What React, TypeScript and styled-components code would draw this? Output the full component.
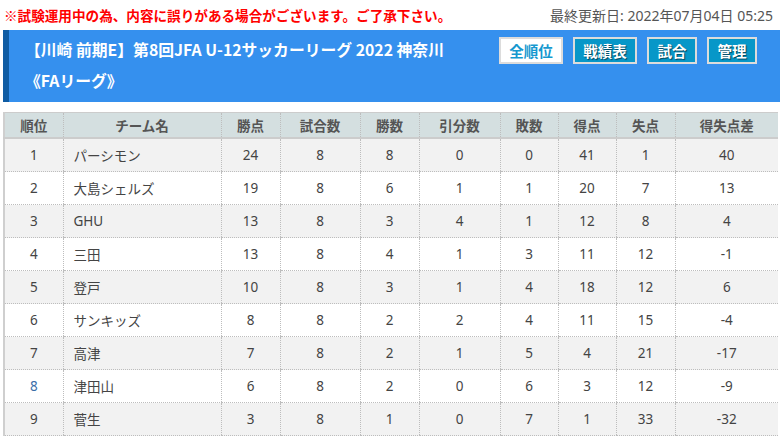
import React from "react";
import styled, { createGlobalStyle } from "styled-components";

const Global = createGlobalStyle`
  html, body { margin: 0; padding: 0; background: #fff; }
  body { font-family: "Noto Sans", "Noto Sans CJK JP", sans-serif; color: #444; }
`;

const Page = styled.div`
  padding-left: 3px;
  width: 774px;
`;

const TopBar = styled.div`
  height: 30px;
  display: flex;
  align-items: center;
  justify-content: space-between;
  padding: 0 4px 0 1px;
`;

const Notice = styled.span`
  color: #f00;
  font-weight: bold;
  font-size: 13.6px;
  font-family: "Noto Sans CJK JP", sans-serif;
`;

const Updated = styled.span`
  color: #555;
  font-size: 14px;
  font-family: "Noto Sans", "Noto Sans CJK JP", sans-serif;
`;

const Header = styled.div`
  height: 72px;
  box-sizing: border-box;
  background: #3590ee;
  border-left: 6px solid #0f5ca3;
  display: flex;
  align-items: flex-start;
  padding: 4px 23px 0 16px;
  margin-right: -3px;
`;

const Title = styled.h1`
  flex: 1;
  margin: 0;
  color: #fff;
  font-size: 15.8px;
  line-height: 31px;
  font-weight: bold;
  font-family: "Noto Sans CJK JP", sans-serif;
`;

const Buttons = styled.div`
  display: flex;
  gap: 10px;
  margin-top: 3px;
`;

const NavButton = styled.button<{ $active?: boolean; $w: number }>`
  width: ${(p) => p.$w}px;
  height: 27px;
  box-sizing: border-box;
  border: 2px solid #dcdcdc;
  background: ${(p) => (p.$active ? "#fff" : "#0797c8")};
  color: ${(p) => (p.$active ? "#1598cf" : "#fff")};
  text-shadow: ${(p) => (p.$active ? "none" : "1px 1px 1px rgba(0,0,0,0.55)")};
  font-weight: bold;
  font-size: 14.5px;
  font-family: "Noto Sans CJK JP", sans-serif;
  padding: 0;
  line-height: 23px;
`;

const Table = styled.table`
  margin-top: 10px;
  width: 774px;
  border-collapse: collapse;
  table-layout: fixed;
  border-left: 2px solid #cfcfcf;
  font-size: 13.5px;
`;

const Th = styled.th`
  height: 24px;
  padding: 0;
  background: #d4dfe0;
  color: #555;
  font-weight: bold;
  font-family: "Noto Sans CJK JP", sans-serif;
  border-top: 1px solid #cccccc;
  border-bottom: 2px solid #cccccc;
  border-left: 1px dotted #bdbdbd;
  &:first-child { border-left: none; }
`;

const Row = styled.tr<{ $odd: boolean }>`
  background: ${(p) => (p.$odd ? "#f2f2f2" : "#fff")};
`;

const Td = styled.td<{ $left?: boolean; $link?: boolean }>`
  height: 32px;
  padding: ${(p) => (p.$left ? "0 0 0 10px" : "0")};
  text-align: ${(p) => (p.$left ? "left" : "center")};
  color: ${(p) => (p.$link ? "#3a6ea8" : "#444")};
  border-left: 1px dotted #bdbdbd;
  border-bottom: 1px dotted #bdbdbd;
  &:first-child { border-left: none; }
`;

const cols = [59, 158, 59, 80, 59, 81, 58, 58, 59, 103];
const heads = ["順位", "チーム名", "勝点", "試合数", "勝数", "引分数", "敗数", "得点", "失点", "得失点差"];

const rows: (string | number)[][] = [
  [1, "パーシモン", 24, 8, 8, 0, 0, 41, 1, 40],
  [2, "大島シェルズ", 19, 8, 6, 1, 1, 20, 7, 13],
  [3, "GHU", 13, 8, 3, 4, 1, 12, 8, 4],
  [4, "三田", 13, 8, 4, 1, 3, 11, 12, -1],
  [5, "登戸", 10, 8, 3, 1, 4, 18, 12, 6],
  [6, "サンキッズ", 8, 8, 2, 2, 4, 11, 15, -4],
  [7, "高津", 7, 8, 2, 1, 5, 4, 21, -17],
  [8, "津田山", 6, 8, 2, 0, 6, 3, 12, -9],
  [9, "菅生", 3, 8, 1, 0, 7, 1, 33, -32],
];

export default function App() {
  return (
    <Page>
      <Global />
      <TopBar>
        <Notice>※試験運用中の為、内容に誤りがある場合がございます。ご了承下さい。</Notice>
        <Updated>最終更新日: 2022年07月04日 05:25</Updated>
      </TopBar>
      <Header>
        <Title>
          【川崎 前期E】第8回JFA U-12サッカーリーグ 2022 神奈川
          <br />
          《FAリーグ》
        </Title>
        <Buttons>
          <NavButton $active $w={64}>全順位</NavButton>
          <NavButton $w={64}>戦績表</NavButton>
          <NavButton $w={50}>試合</NavButton>
          <NavButton $w={50}>管理</NavButton>
        </Buttons>
      </Header>
      <Table>
        <colgroup>
          {cols.map((w, i) => (
            <col key={i} style={{ width: w }} />
          ))}
        </colgroup>
        <thead>
          <tr>
            {heads.map((h) => (
              <Th key={h}>{h}</Th>
            ))}
          </tr>
        </thead>
        <tbody>
          {rows.map((r, i) => (
            <Row key={i} $odd={i % 2 === 0}>
              {r.map((c, j) => (
                <Td key={j} $left={j === 1} $link={j === 0 && r[0] === 8}>
                  {c}
                </Td>
              ))}
            </Row>
          ))}
        </tbody>
      </Table>
    </Page>
  );
}
